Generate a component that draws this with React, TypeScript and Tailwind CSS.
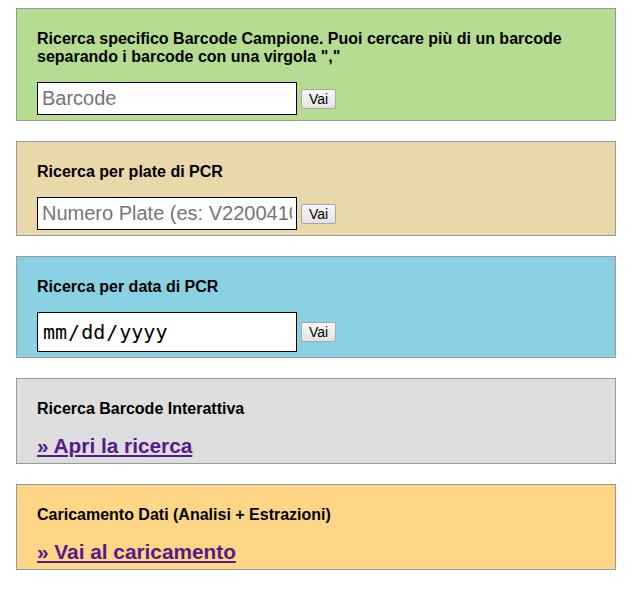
import React from "react";

const font = { fontFamily: '"Liberation Sans", Arial, sans-serif' };

function Btn() {
  return (
    <button
      type="button"
      className="h-[20px] px-[7px] text-[14px] leading-[16px] text-black border border-[#a6a6a6] rounded-[2px] bg-gradient-to-b from-[#f8f8f8] to-[#e2e2e2] font-['Liberation_Sans',Arial,sans-serif]"
    >
      Vai
    </button>
  );
}

function Heading({ children }: { children: React.ReactNode }) {
  return <h4 className="text-[16px] leading-[18px] font-bold text-black">{children}</h4>;
}

export default function App() {
  return (
    <div className="bg-white min-h-[589px] pt-2 pl-4" style={font}>
      <div className="w-[600px] flex flex-col gap-[20px]">
        <div className="border border-[#999999] bg-[#b5dc90] px-5 pt-[21px] pb-[5px]">
          <div className="w-[540px]">
            <Heading>
              Ricerca specifico Barcode Campione. Puoi cercare più di un barcode separando i barcode con una virgola ","
            </Heading>
          </div>
          <div className="mt-[16px] flex items-center gap-[4px]">
            <input
              type="text"
              placeholder="Barcode"
              className="w-[260px] h-[33px] border border-black bg-white px-[4px] text-[20px] text-black placeholder:text-[#757575] outline-none font-['Liberation_Sans',Arial,sans-serif]"
            />
            <Btn />
          </div>
        </div>

        <div className="border border-[#999999] bg-[#e8d8aa] px-5 pt-[21px] pb-[5px]">
          <Heading>Ricerca per plate di PCR</Heading>
          <div className="mt-[16px] flex items-center gap-[4px]">
            <input
              type="text"
              placeholder="Numero Plate (es: V220041001)"
              className="w-[260px] h-[33px] border border-black bg-white px-[4px] text-[20px] text-black placeholder:text-[#757575] outline-none font-['Liberation_Sans',Arial,sans-serif]"
            />
            <Btn />
          </div>
        </div>

        <div className="border border-[#999999] bg-[#8ad1e3] px-5 pt-[21px] pb-[5px]">
          <Heading>Ricerca per data di PCR</Heading>
          <div className="mt-[16px] flex items-center gap-[4px]">
            <input
              type="date"
              className="w-[260px] h-[40px] border border-black bg-white px-[4px] text-[20px] text-black outline-none font-['DejaVu_Sans_Mono',monospace] [&::-webkit-calendar-picker-indicator]:hidden"
            />
            <Btn />
          </div>
        </div>

        <div className="border border-[#999999] bg-[#dddddd] px-5 pt-[21px] pb-[5px]">
          <div className="mb-[16px]">
            <Heading>Ricerca Barcode Interattiva</Heading>
          </div>
          <a href="#" className="block w-fit text-[20.8px] leading-[24px] font-bold text-[#551a8b] underline">
            » Apri la ricerca
          </a>
        </div>

        <div className="border border-[#999999] bg-[#fed686] px-5 pt-[21px] pb-[5px]">
          <div className="mb-[16px]">
            <Heading>Caricamento Dati (Analisi + Estrazioni)</Heading>
          </div>
          <a href="#" className="block w-fit text-[20.8px] leading-[24px] font-bold text-[#551a8b] underline">
            » Vai al caricamento
          </a>
        </div>
      </div>
    </div>
  );
}
